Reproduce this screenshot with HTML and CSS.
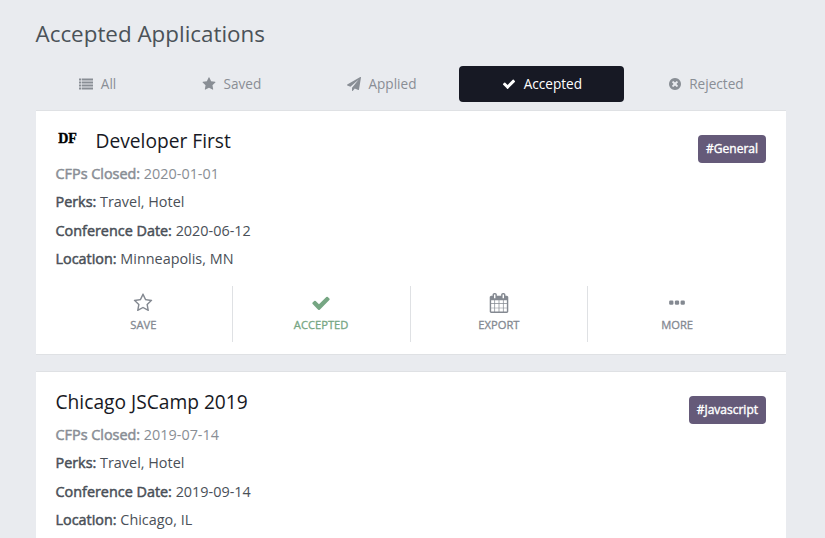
FILE: index.html
```html
<!DOCTYPE html>
<html lang="en">
<head>
<meta charset="utf-8">
<title>Accepted Applications</title>
<link rel="stylesheet" href="styles.css">
</head>
<body>
<svg class="sprite" viewBox="0 0 1792 1792">
  <symbol id="check" viewBox="0 0 1792 1792"><path d="M1671 566q0 40-28 68l-724 724-136 136q-28 28-68 28t-68-28l-136-136-362-362q-28-28-28-68t28-68l136-136q28-28 68-28t68 28l294 295 656-657q28-28 68-28t68 28l136 136q28 28 28 68z"/></symbol>
</svg>
<main>
  <h1>Accepted Applications</h1>
  <nav class="tabs">
    <a class="tab"><svg class="icon" viewBox="0 0 1792 1792"><path d="M0 200h256v250H0zM340 200h1452v250H340zM0 580h256v250H0zM340 580h1452v250H340zM0 960h256v250H0zM340 960h1452v250H340zM0 1340h256v250H0zM340 1340h1452v250H340z"/></svg>All</a>
    <a class="tab"><svg class="icon" viewBox="0 0 1792 1792"><path d="M1728 647q0 22-26 48l-363 354 86 500q1 7 1 20 0 21-10.5 35.5t-30.5 14.5q-19 0-40-12l-449-236-449 236q-22 12-40 12-21 0-31.5-14.5t-10.5-35.5q0-6 2-20l86-500-364-354q-25-27-25-48 0-37 56-46l502-73 225-455q19-41 49-41t49 41l225 455 502 73q56 9 56 46z"/></svg>Saved</a>
    <a class="tab"><svg class="icon" viewBox="0 0 1792 1792"><path d="M1764 11q33 24 27 64l-256 1536q-5 29-32 45-14 8-31 8-11 0-24-5l-453-185-242 295q-18 23-49 23-13 0-22-4-19-7-30.500-23.500t-11.500-36.500v-349l864-1059-1069 925-395-162q-37-14-40-55-2-40 32-59l1664-960q15-9 32-9 20 0 36 11z"/></svg>Applied</a>
    <a class="tab active"><svg class="icon"><use href="#check"/></svg>Accepted</a>
    <a class="tab"><svg class="icon" viewBox="0 0 1792 1792"><path d="M1277 1122q0-26-19-45l-181-181 181-181q19-19 19-45 0-27-19-46l-90-90q-19-19-46-19-26 0-45 19l-181 181-181-181q-19-19-45-19-27 0-46 19l-90 90q-19 19-19 46 0 26 19 45l181 181-181 181q-19 19-19 45 0 27 19 46l90 90q19 19 46 19 26 0 45-19l181-181 181 181q19 19 45 19 27 0 46-19l90-90q19-19 19-46zm387-226q0 209-103 385.500t-279.500 279.500-385.500 103-385.500-103-279.500-279.500-103-385.500 103-385.500 279.500-279.500 385.500-103 385.500 103 279.500 279.500 103 385.500z"/></svg>Rejected</a>
  </nav>

  <article class="card">
    <header class="card-head">
      <h2><span class="logo">DF</span>Developer First</h2>
      <span class="tag">#General</span>
    </header>
    <p class="closed"><b>CFPs Closed:</b> 2020-01-01</p>
    <p><b>Perks:</b> Travel, Hotel</p>
    <p><b>Conference Date:</b> 2020-06-12</p>
    <p><b>Location:</b> Minneapolis, MN</p>
    <div class="actions">
      <a class="action"><svg class="icon" viewBox="0 0 1792 1792"><path d="M1201 1004l306-297-422-62-189-382-189 382-422 62 306 297-73 421 378-199 377 199zm527-357q0 22-26 48l-363 354 86 500q1 7 1 20 0 50-41 50-19 0-40-12l-449-236-449 236q-22 12-40 12-21 0-31.500-14.500t-10.500-35.500q0-6 2-20l86-500-364-354q-25-27-25-48 0-37 56-46l502-73 225-455q19-41 49-41t49 41l225 455 502 73q56 9 56 46z"/></svg>SAVE</a>
      <a class="action accepted"><svg class="icon"><use href="#check"/></svg>ACCEPTED</a>
      <a class="action"><svg class="icon" viewBox="0 0 1792 1792"><path d="M192 1664h288v-288h-288v288zm352 0h320v-288h-320v288zm-352-352h288v-320h-288v320zm352 0h320v-320h-320v320zm-352-384h288v-288h-288v288zm736 736h320v-288h-320v288zm-384-736h320v-288h-320v288zm768 736h288v-288h-288v288zm-384-352h320v-320h-320v320zm-352-864v-288q0-13-9.500-22.500t-22.500-9.500h-64q-13 0-22.500 9.500t-9.500 22.500v288q0 13 9.500 22.500t22.500 9.500h64q13 0 22.500-9.500t9.500-22.500zm736 864h288v-320h-288v320zm-384-384h320v-288h-320v288zm384 0h288v-288h-288v288zm32-480v-288q0-13-9.500-22.500t-22.500-9.500h-64q-13 0-22.500 9.500t-9.500 22.500v288q0 13 9.500 22.500t22.500 9.500h64q13 0 22.500-9.500t9.500-22.500zm384-64v1280q0 52-38 90t-90 38h-1408q-52 0-90-38t-38-90v-1280q0-52 38-90t90-38h128v-96q0-66 47-113t113-47h64q66 0 113 47t47 113v96h384v-96q0-66 47-113t113-47h64q66 0 113 47t47 113v96h128q52 0 90 38t38 90z"/></svg>EXPORT</a>
      <a class="action"><svg class="icon" viewBox="0 0 1792 1792"><rect x="192" y="672" width="384" height="384" rx="110"/><rect x="704" y="672" width="384" height="384" rx="110"/><rect x="1216" y="672" width="384" height="384" rx="110"/></svg>MORE</a>
    </div>
  </article>

  <article class="card">
    <header class="card-head">
      <h2>Chicago JSCamp 2019</h2>
      <span class="tag">#Javascript</span>
    </header>
    <p class="closed"><b>CFPs Closed:</b> 2019-07-14</p>
    <p><b>Perks:</b> Travel, Hotel</p>
    <p><b>Conference Date:</b> 2019-09-14</p>
    <p><b>Location:</b> Chicago, IL</p>
  </article>
</main>
</body>
</html>
```
FILE: styles.css
```css
* { box-sizing: border-box; }
html { overflow: hidden; }
body {
  margin: 0;
  height: 538px;
  overflow: hidden;
  background: #e9ebef;
  color: #4a5058;
  font: 14.4px/28.4px "Open Sans", sans-serif;
}
.sprite { display: none; }
main { width: 750px; margin-left: 36px; padding-top: 18px; }
h1, h2, p { margin: 0; font-weight: 400; }
h1 { margin-left: -.5px; font-size: 22.4px; line-height: 32px; color: #4b5258; }
.icon { fill: currentColor; flex: none; }

.tabs { display: flex; margin-top: 16px; }
.tab {
  display: flex;
  flex: 1 1 auto;
  align-items: center;
  justify-content: center;
  height: 36px;
  padding: 0 8px 0 9px;
  border-radius: 4px;
  color: #898e95;
  font-size: 13.6px;
}
.tab .icon { width: 14px; height: 14px; margin-right: 7.5px; }
.tab.active { background: #171924; color: #fff; }

.card {
  margin-top: 8px;
  height: 245px;
  padding: 16px 20px 0 19.5px;
  background: #fff;
  border: solid #dfe1e4;
  border-width: 1px 0;
}
.card + .card { height: 167px; margin-top: 16px; border-bottom: 0; }
.card-head { display: flex; justify-content: space-between; height: 33px; }
h2 { display: flex; align-items: center; height: 28px; font-size: 19.2px; line-height: 28px; color: #171924; }
.logo {
  width: 26px;
  margin-right: 14px;
  padding: 0 2px 4px 0;
  text-align: center;
  font: 700 14px/20px "Liberation Serif", serif;
  color: #000;
  -webkit-text-stroke: .4px;
}
.tag {
  height: 28px;
  margin-top: 8px;
  padding: 0 8px;
  border-radius: 4px;
  background: #655a79;
  color: #fff;
  font-size: 12px;
  line-height: 28px;
  -webkit-text-stroke: .4px;
}
p b { font-weight: 400; -webkit-text-stroke: .5px; }
.closed { color: #898e95; }

.actions { display: grid; grid-template-columns: repeat(4, 1fr); margin: 12px 0 0 -.5px; }
.action {
  display: flex;
  flex-direction: column;
  align-items: center;
  height: 56px;
  padding-top: 7px;
  color: #848991;
  font-size: 11.2px;
  line-height: 16px;
  -webkit-text-stroke: .3px;
}
.action:not(:last-child) { border-right: 1px solid #dfe1e4; }
.action .icon { width: 20px; height: 20px; margin-bottom: 4px; stroke: none; }
.action.accepted { color: #76a683; }
```
